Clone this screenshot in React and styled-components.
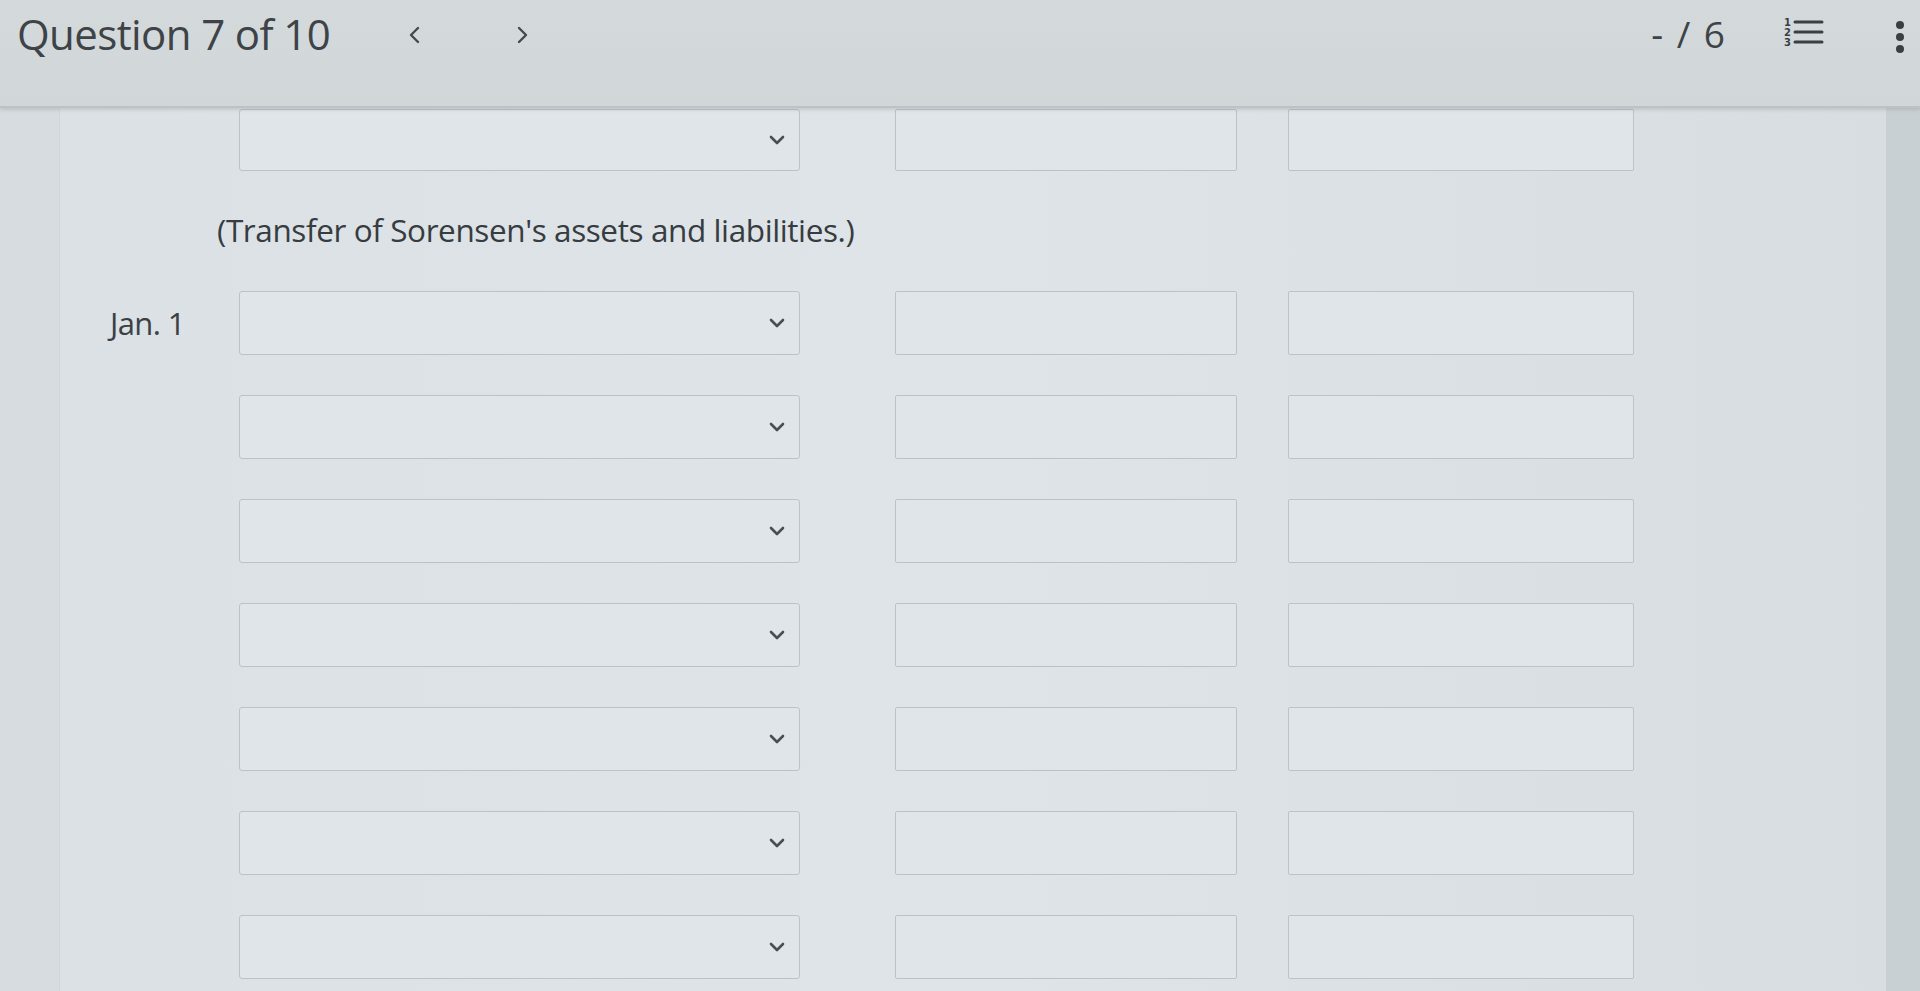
import React from "react";
import styled, { createGlobalStyle } from "styled-components";

const GlobalStyle = createGlobalStyle`
  html, body {
    margin: 0;
    padding: 0;
    height: 100%;
    overflow: hidden;
  }
  body {
    font-family: "Open Sans", "Liberation Sans", sans-serif;
    background: #dbe1e4;
    color: #3d4246;
  }
`;

const Page = styled.div`
  width: 1920px;
  height: 991px;
  display: flex;
  flex-direction: column;
  overflow: hidden;
  background: #dbe1e4;
`;

const Header = styled.header`
  flex: 0 0 106px;
  display: flex;
  align-items: flex-start;
  padding: 0 0 0 17px;
  background: linear-gradient(180deg, #d4dadc 0%, #d1d7d9 100%);
  border-bottom: 2px solid #bcc2c5;
  box-shadow: 0 2px 3px rgba(80, 90, 95, 0.18);
  position: relative;
  z-index: 2;
`;

const Title = styled.h1`
  margin: 7px 0 0 0;
  font-size: 42px;
  font-weight: 400;
  letter-spacing: -0.6px;
  color: #3e4347;
  line-height: 54px;
`;

const NavButton = styled.button`
  border: 0;
  background: none;
  padding: 0;
  margin: 22px 0 0 ${p => p.$gap}px;
  width: 24px;
  height: 26px;
  display: flex;
  align-items: center;
  justify-content: center;
  color: #44494d;
  cursor: pointer;
`;

const Spacer = styled.div`
  flex: 1;
`;

const Score = styled.span`
  margin-top: 8px;
  font-size: 37px;
  color: #3e4347;
  line-height: 52px;
  letter-spacing: 2px;
`;

const IconButton = styled.button`
  border: 0;
  background: none;
  padding: 0;
  margin: ${p => p.$topGap}px ${p => p.$right}px 0 ${p => p.$left}px;
  display: flex;
  color: #3a3f43;
  cursor: pointer;
`;

const Body = styled.div`
  flex: 1;
  display: grid;
  grid-template-columns: 60px 1fr 34px;
  min-height: 0;
`;

const SideStrip = styled.div`
  background: ${p => p.$tone};
  border-right: ${p => (p.$line ? "1px solid #d0d6d9" : "none")};
`;

const Form = styled.main`
  display: flex;
  flex-direction: column;
  padding-top: 1px;
  background: linear-gradient(90deg, #dbe1e4 0%, #dee4e7 50%, #d7dde0 100%);
`;

const Row = styled.div`
  display: flex;
  align-items: center;
  height: ${p => p.$h}px;
  margin-top: ${p => p.$top}px;
`;

const DateCell = styled.div`
  width: 179px;
  padding-left: 50px;
  box-sizing: border-box;
  font-family: "Open Sans", Lato, sans-serif;
  font-size: 31px;
  letter-spacing: -0.6px;
  color: #3b4044;
`;

const Note = styled.p`
  margin: 40px 0 0 157px;
  font-family: "Open Sans", Lato, sans-serif;
  font-size: 31.5px;
  letter-spacing: -0.4px;
  color: #373c40;
  line-height: 38px;
`;

const Select = styled.div`
  width: 561px;
  height: 100%;
  box-sizing: border-box;
  display: flex;
  align-items: center;
  justify-content: flex-end;
  padding-right: 14px;
  background: #dfe5e8;
  border: 1px solid #bcc2c5;
  border-radius: 3px;
  color: #494e52;
`;

const Amount = styled.div`
  width: ${p => p.$w}px;
  height: 100%;
  box-sizing: border-box;
  margin-left: ${p => p.$gap}px;
  background: #dfe5e8;
  border: 1px solid #bcc2c5;
  border-radius: 2px;
`;

const Chevron = ({ dir }) => {
  const d = dir === "left" ? "M14 6 L7 13 L14 20" : dir === "right" ? "M10 6 L17 13 L10 20" : "M2 2 L8 8 L14 2";
  if (dir === "down") {
    return (
      <svg width="16" height="10" viewBox="0 0 16 10">
        <path d={d} fill="none" stroke="currentColor" strokeWidth="2.6" strokeLinecap="round" strokeLinejoin="round" />
      </svg>
    );
  }
  return (
    <svg width="24" height="26" viewBox="0 0 24 26">
      <path d={d} fill="none" stroke="currentColor" strokeWidth="2.4" strokeLinecap="round" strokeLinejoin="round" />
    </svg>
  );
};

const ListIcon = () => (
  <svg width="42" height="34" viewBox="0 0 42 34">
    <g fontSize="10" fontWeight="700" fontFamily="DejaVu Sans" fill="currentColor">
      <text x="1" y="10">1</text>
      <text x="1" y="20">2</text>
      <text x="1" y="30">3</text>
    </g>
    <g stroke="currentColor" strokeWidth="3" strokeLinecap="round">
      <line x1="12" y1="6" x2="39" y2="6" />
      <line x1="12" y1="16" x2="39" y2="16" />
      <line x1="12" y1="26" x2="39" y2="26" />
    </g>
  </svg>
);

const MoreIcon = () => (
  <svg width="10" height="34" viewBox="0 0 10 34">
    <circle cx="5" cy="5" r="4" fill="currentColor" />
    <circle cx="5" cy="17" r="4" fill="currentColor" />
    <circle cx="5" cy="29" r="4" fill="currentColor" />
  </svg>
);

const EntryRow = ({ date, top, h = 64 }) => (
  <Row $top={top} $h={h}>
    <DateCell>{date}</DateCell>
    <Select>
      <Chevron dir="down" />
    </Select>
    <Amount $w={342} $gap={95} />
    <Amount $w={346} $gap={51} />
  </Row>
);

export default function App() {
  const rows = ["Jan. 1", "", "", "", "", "", ""];
  return (
    <>
      <GlobalStyle />
      <Page>
        <Header>
          <Title>Question 7 of 10</Title>
          <NavButton $gap={74} aria-label="Previous">
            <Chevron dir="left" />
          </NavButton>
          <NavButton $gap={81} aria-label="Next">
            <Chevron dir="right" />
          </NavButton>
          <Spacer />
          <Score>- / 6</Score>
          <IconButton $topGap={16} $left={56} $right={0} aria-label="Question list">
            <ListIcon />
          </IconButton>
          <IconButton $topGap={20} $left={70} $right={15} aria-label="More">
            <MoreIcon />
          </IconButton>
        </Header>
        <Body>
          <SideStrip $tone="#d6dcdf" $line />
          <Form>
            <EntryRow date="" top={0} h={62} />
            <Note>(Transfer of Sorensen's assets and liabilities.)</Note>
            {rows.map((d, i) => (
              <EntryRow key={i} date={d} top={i === 0 ? 42 : 40} />
            ))}
          </Form>
          <SideStrip $tone="#c9d0d3" />
        </Body>
      </Page>
    </>
  );
}
